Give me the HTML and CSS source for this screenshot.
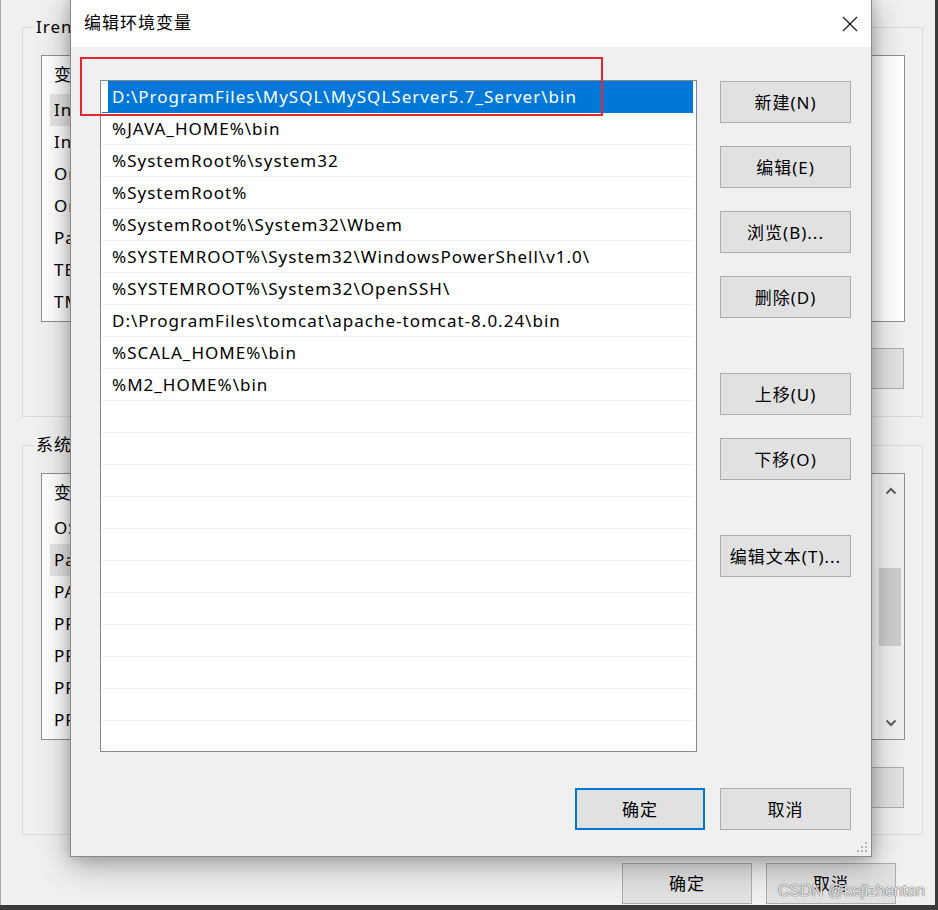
FILE: index.html
```html
<!DOCTYPE html>
<html lang="zh-CN">
<head>
<meta charset="utf-8">
<title>编辑环境变量</title>
<link rel="stylesheet" href="styles.css">
</head>
<body>
<div class="screen">
  <div class="win">
    <div class="group">
      <div class="group-title">Irene 的用户变量(U)</div>
      <div class="olist">
        <div class="ocontent">
          <div class="ohead"><span class="ocol">变量</span><span>值</span></div>
          <div class="orow sel"><span class="ocell">IntelliJ IDEA</span></div>
          <div class="orow"><span class="ocell">IntelliJ IDEA Community Edition</span></div>
          <div class="orow"><span class="ocell">OneDrive</span></div>
          <div class="orow"><span class="ocell">OneDriveConsumer</span></div>
          <div class="orow"><span class="ocell">Path</span></div>
          <div class="orow"><span class="ocell">TEMP</span></div>
          <div class="orow"><span class="ocell">TMP</span></div>
        </div>
      </div>
      <div class="obtns">
        <button class="btn obtn">新建(N)...</button>
        <button class="btn obtn">编辑(E)...</button>
        <button class="btn obtn">删除(D)</button>
      </div>
    </div>
    <div class="group g2">
      <div class="group-title">系统变量(S)</div>
      <div class="olist">
        <div class="ocontent">
          <div class="ohead"><span class="ocol">变量</span><span>值</span></div>
          <div class="orow"><span class="ocell">OS</span></div>
          <div class="orow sel"><span class="ocell">Path</span></div>
          <div class="orow"><span class="ocell">PATHEXT</span></div>
          <div class="orow"><span class="ocell">PROCESSOR_ARCHITECTURE</span></div>
          <div class="orow"><span class="ocell">PROCESSOR_IDENTIFIER</span></div>
          <div class="orow"><span class="ocell">PROCESSOR_LEVEL</span></div>
          <div class="orow"><span class="ocell">PROCESSOR_REVISION</span></div>
        </div>
        <div class="vscroll">
          <div class="sarrow">
            <svg width="12" height="8" viewBox="0 0 12 8"><path d="M1.5 6.5 L6 2 L10.5 6.5" fill="none" stroke="#606060" stroke-width="2"/></svg>
          </div>
          <div class="strack"><div class="sthumb"></div></div>
          <div class="sarrow">
            <svg width="12" height="8" viewBox="0 0 12 8"><path d="M1.5 1.5 L6 6 L10.5 1.5" fill="none" stroke="#606060" stroke-width="2"/></svg>
          </div>
        </div>
      </div>
      <div class="obtns">
        <button class="btn obtn">新建(W)...</button>
        <button class="btn obtn">编辑(I)...</button>
        <button class="btn obtn">删除(L)</button>
      </div>
    </div>
    <div class="obtns bottom">
      <button class="btn obtn">确定</button>
      <button class="btn obtn">取消</button>
    </div>
  </div>

  <div class="dialog">
    <div class="dtitle">
      <span class="dtitle-text">编辑环境变量</span>
      <svg class="close" width="16" height="16" viewBox="0 0 16 16"><path d="M1 1 L15 15 M15 1 L1 15" stroke="#1a1a1a" stroke-width="1.3" fill="none"/></svg>
    </div>
    <div class="dbody">
      <div class="dmain">
        <div class="dlist">
          <div class="drow sel"><span class="dcell">D:\ProgramFiles\MySQL\MySQLServer5.7_Server\bin</span></div>
          <div class="drow"><span class="dcell">%JAVA_HOME%\bin</span></div>
          <div class="drow"><span class="dcell">%SystemRoot%\system32</span></div>
          <div class="drow"><span class="dcell">%SystemRoot%</span></div>
          <div class="drow"><span class="dcell">%SystemRoot%\System32\Wbem</span></div>
          <div class="drow"><span class="dcell">%SYSTEMROOT%\System32\WindowsPowerShell\v1.0\</span></div>
          <div class="drow"><span class="dcell">%SYSTEMROOT%\System32\OpenSSH\</span></div>
          <div class="drow"><span class="dcell">D:\ProgramFiles\tomcat\apache-tomcat-8.0.24\bin</span></div>
          <div class="drow"><span class="dcell">%SCALA_HOME%\bin</span></div>
          <div class="drow"><span class="dcell">%M2_HOME%\bin</span></div>
          <div class="drow"><span class="dcell"></span></div>
          <div class="drow"><span class="dcell"></span></div>
          <div class="drow"><span class="dcell"></span></div>
          <div class="drow"><span class="dcell"></span></div>
          <div class="drow"><span class="dcell"></span></div>
          <div class="drow"><span class="dcell"></span></div>
          <div class="drow"><span class="dcell"></span></div>
          <div class="drow"><span class="dcell"></span></div>
          <div class="drow"><span class="dcell"></span></div>
          <div class="drow"><span class="dcell"></span></div>
          <div class="drow"><span class="dcell"></span></div>
          <div class="drow"><span class="dcell"></span></div>
        </div>
        <div class="dside">
          <button class="btn dbtn">新建(N)</button>
          <button class="btn dbtn">编辑(E)</button>
          <button class="btn dbtn">浏览(B)...</button>
          <button class="btn dbtn">删除(D)</button>
          <button class="btn dbtn sp">上移(U)</button>
          <button class="btn dbtn">下移(O)</button>
          <button class="btn dbtn sp">编辑文本(T)...</button>
        </div>
      </div>
      <div class="dfoot">
        <button class="btn fbtn default">确定</button>
        <button class="btn fbtn">取消</button>
      </div>
    </div>
    <svg class="grip" width="13" height="13" viewBox="0 0 13 13">
      <rect x="10" y="2" width="2" height="2" fill="#b4b4b4"/>
      <rect x="6" y="6" width="2" height="2" fill="#b4b4b4"/>
      <rect x="10" y="6" width="2" height="2" fill="#b4b4b4"/>
      <rect x="2" y="10" width="2" height="2" fill="#b4b4b4"/>
      <rect x="6" y="10" width="2" height="2" fill="#b4b4b4"/>
      <rect x="10" y="10" width="2" height="2" fill="#b4b4b4"/>
    </svg>
  </div>

  <div class="redbox"></div>
  <div class="watermark">CSDN @kejizhentan</div>
</div>
</body>
</html>
```

FILE: styles.css
```css
* { box-sizing: border-box; }

html, body {
  margin: 0;
  padding: 0;
  background: #3a3a3a;
}

body {
  font-family: "Noto Sans", "Noto Sans CJK SC", sans-serif;
  font-size: 17px;
  letter-spacing: 1px;
  color: #000;
}

.screen {
  position: relative;
  width: 938px;
  height: 910px;
  overflow: hidden;
  background: #3a3a3a;
}

/* background window */
.win {
  width: 935px;
  height: 905px;
  background: #f0f0f0;
  border-left: 1px solid #a9a9a9;
  padding: 27px 12px 0 21px;
}

.group {
  border: 1px solid #dcdcdc;
  padding: 0 17px 27px 18px;
}

.group.g2 {
  margin-top: 28px;
  padding-bottom: 26px;
}

.group-title {
  display: table;
  margin: -12px 0 0 -7px;
  padding: 0 2px;
  line-height: 22px;
  background: #f0f0f0;
}

.olist {
  margin-top: 17px;
  height: 267px;
  border: 1px solid #8c8f94;
  background: #fff;
  display: flex;
  overflow: hidden;
}

.ocontent {
  flex: 1;
  min-width: 0;
}

.ohead {
  height: 38px;
  line-height: 38px;
  padding-left: 12px;
  display: flex;
  white-space: nowrap;
}

.ocol {
  width: 260px;
}

.orow {
  height: 32px;
  padding-left: 8px;
  display: flex;
}

.ocell {
  padding-left: 4px;
  width: 300px;
  line-height: 32px;
  white-space: nowrap;
}

.orow.sel .ocell {
  background: #e5e5e5;
}

.vscroll {
  width: 26px;
  display: flex;
  flex-direction: column;
  background: #f0f0f0;
}

.sarrow {
  height: 33px;
  display: flex;
  align-items: center;
  justify-content: center;
}

.strack {
  flex: 1;
  padding: 61px 3px 0 1px;
}

.sthumb {
  height: 78px;
  background: #cdcdcd;
}

.obtns {
  margin-top: 26px;
  display: flex;
  justify-content: flex-end;
  gap: 14px;
  padding-right: 1px;
}

.g2 .obtns {
  margin-top: 27px;
}

.obtns.bottom {
  margin-top: 28px;
  padding-right: 27px;
}

.btn {
  font-family: "Noto Sans", "Noto Sans CJK SC", sans-serif;
  font-size: 17px;
  letter-spacing: 1px;
  color: #000;
  background: #e1e1e1;
  border: 1px solid #adadad;
  padding: 0 0 2px 0;
  margin: 0;
  text-align: center;
  white-space: nowrap;
}

.obtn {
  width: 130px;
  height: 41px;
}

/* dialog */
.dialog {
  position: absolute;
  left: 70px;
  top: -2px;
  width: 802px;
  height: 859px;
  border: 1px solid #8a8a8a;
  background: #f0f0f0;
  display: flex;
  flex-direction: column;
  box-shadow: 0 8px 30px rgba(0, 0, 0, 0.32), 0 0 12px rgba(0, 0, 0, 0.18);
}

.dtitle {
  height: 48px;
  background: #fff;
  display: flex;
  align-items: center;
  justify-content: space-between;
  padding: 0 13px 0 13px;
}

.dtitle-text {
  line-height: 24px;
}

.close {
  display: block;
  margin-top: 1px;
}

.dbody {
  padding: 33px 20px 26px 29px;
  display: flex;
  flex-direction: column;
}

.dmain {
  display: flex;
  gap: 23px;
}

.dlist {
  width: 597px;
  height: 672px;
  border: 1px solid #828790;
  background: #fff;
  overflow: hidden;
}

.drow {
  height: 32px;
  margin: 0 3px 0 1px;
  padding-left: 6px;
  border-bottom: 1px solid #efefef;
  display: flex;
}

.dcell {
  flex: 1;
  padding-left: 4px;
  line-height: 31px;
  white-space: nowrap;
  overflow: hidden;
}

.drow.sel {
  border-bottom-color: #0078d7;
}

.drow.sel .dcell {
  background: #0078d7;
  color: #fff;
}

.dside {
  width: 131px;
  padding-top: 1px;
  display: flex;
  flex-direction: column;
  gap: 23px;
}

.dbtn {
  width: 131px;
  height: 42px;
}

.dbtn.sp {
  margin-top: 32px;
}

.dfoot {
  margin-top: 36px;
  display: flex;
  justify-content: flex-end;
  gap: 15px;
}

.fbtn {
  width: 131px;
  height: 42px;
}

.fbtn.default {
  width: 130px;
  border: 2px solid #0078d7;
}

.grip {
  position: absolute;
  right: 3px;
  bottom: 3px;
}

.redbox {
  position: absolute;
  left: 80px;
  top: 57px;
  width: 523px;
  height: 59px;
  border: 2px solid #e8262d;
}

.watermark {
  position: absolute;
  left: 778px;
  top: 881px;
  font-family: "Liberation Sans", Arial, sans-serif;
  font-size: 16px;
  letter-spacing: 0;
  line-height: 20px;
  color: rgba(250, 250, 250, 0.9);
  text-shadow: 0 0 1px #555, 0 0 1px #555;
}
```
